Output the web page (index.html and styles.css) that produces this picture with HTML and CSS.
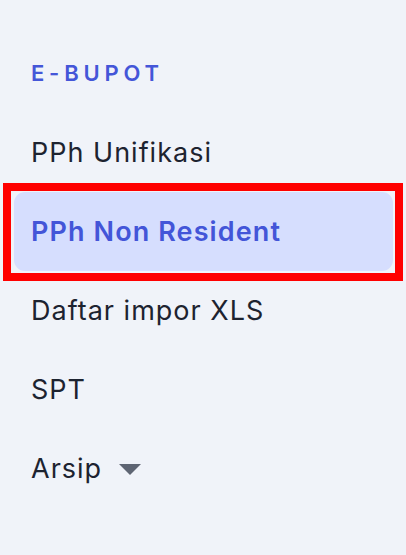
FILE: index.html
```html
<!DOCTYPE html>
<html lang="id">
<head>
<meta charset="utf-8">
<title>E-BUPOT</title>
<link rel="stylesheet" href="styles.css">
</head>
<body>
<nav class="sidenav">
  <div class="section-title">E-BUPOT</div>
  <ul class="menu">
    <li class="menu-item">PPh Unifikasi</li>
    <li class="menu-item is-active">PPh Non Resident</li>
    <li class="menu-item">Daftar impor XLS</li>
    <li class="menu-item">SPT</li>
    <li class="menu-item">Arsip
      <svg class="caret" width="22" height="11" viewBox="0 0 22 11" aria-hidden="true"><path d="M0 0H22L11 11Z" fill="#5e6573"/></svg>
    </li>
  </ul>
</nav>
</body>
</html>
```

FILE: styles.css
```css
* { box-sizing: border-box; }
html, body {
  margin: 0;
  padding: 0;
  background: #f0f3f9;
}
body {
  font-family: Inter, "Noto Sans", "Liberation Sans", sans-serif;
  width: 406px;
  height: 555px;
  overflow: hidden;
}
.sidenav {
  padding: 0 13px 0 14px;
}
.section-title {
  padding: 63px 0 30px 17px;
  font-size: 22px;
  line-height: 20px;
  font-weight: 600;
  letter-spacing: 4.8px;
  color: #4456d8;
}
.menu {
  list-style: none;
  margin: 0;
  padding: 0;
}
.menu-item {
  position: relative;
  height: 79px;
  display: flex;
  align-items: center;
  padding-left: 17px;
  font-size: 27px;
  font-weight: 400;
  letter-spacing: 1px;
  color: #1d2330;
  border-radius: 11px;
}
.menu-item.is-active {
  background: #d6defe;
  color: #4355d8;
  font-weight: 600;
  letter-spacing: 1.1px;
}
.menu-item.is-active::before {
  content: "";
  position: absolute;
  top: -1px;
  bottom: -2px;
  left: -3px;
  right: -2px;
  border-radius: 2px;
  z-index: -1;
  background: #f7f9fd;
}
.menu-item.is-active::after {
  content: "";
  position: absolute;
  top: -9px;
  bottom: -10px;
  left: -11px;
  right: -10px;
  border: 8px solid #ff0000;
  pointer-events: none;
}
.caret {
  margin-left: 17px;
  margin-top: 1px;
}
```
